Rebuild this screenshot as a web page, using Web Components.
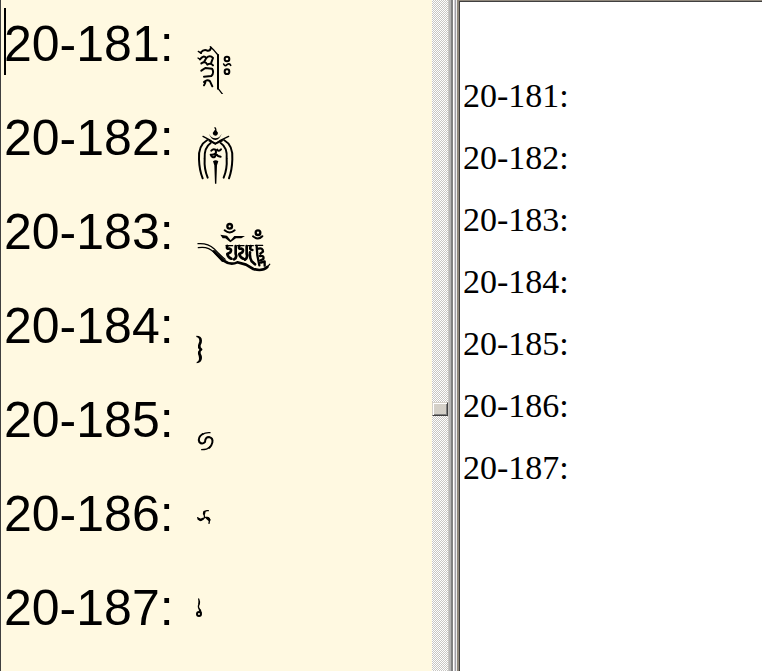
<!DOCTYPE html>
<html lang="en">
<head>
<meta charset="utf-8">
<title>Glyph list</title>
<style>
html, body { height: 100%; margin: 0; overflow: hidden; }
</style>
</head>
<body>
<glyph-compare></glyph-compare>
<script>
const INK = 'fill="none" stroke="#000" stroke-linecap="round" stroke-linejoin="round"';
const MARKS = {
  '20-181': `<g transform="translate(4 10) scale(.3333)"><g ${INK}>
    <path stroke-width="4" d="M61 26L72 37L84 51M84 151L98 169M25 40L34 46M30 64L24 60"/>
    <path stroke-width="6" d="M84 51V152"/>
    <path stroke-width="6" d="M32 44Q42 32 52 38Q60 40 63 29M30 64Q40 50 49 60L42 72M49 60Q60 50 69 60L64 73M34 76Q46 68 52 80Q62 74 69 82M34 98L46 90L66 92Q74 104 64 114L42 116M42 132Q52 122 60 130L67 145M42 142L46 134"/>
    <circle cx="111" cy="63" r="7" stroke-width="6"/><circle cx="111" cy="101" r="7" stroke-width="6"/>
    <path stroke-width="5" d="M101 78Q105 87 111 80Q118 74 122 82"/></g></g>`,
  '20-182': `<g transform="translate(4 0) scale(.3333)"><g ${INK}>
    <path stroke-width="4" d="M75 17Q80 22 77 28M39 43L63 56L76 66L91 55L116 43"/>
    <path stroke-width="6" d="M52 54Q24 70 27 112Q28 145 38 169M62 63Q42 77 44 110Q42 141 53 167M102 54Q130 70 127 112Q126 145 117 169M92 63Q113 77 110 110Q112 141 101 167"/>
    <path stroke-width="6" d="M58 56L76 65L96 56M64 86Q70 79 76 83Q80 91 76 95Q70 99 62 98Q67 110 75 104Q80 94 84 102L92 104M82 83Q86 90 93 82"/></g>
    <path d="M76 22L84 32Q83 41 76 41Q69 41 68 33ZM57 35Q64 49 76 49Q88 49 95 35Q89 53 76 54Q63 53 57 35ZM69 118Q77 112 85 118L81 130L79 185H75L73 130Z"/></g>`,
  '20-183': `<g transform="translate(4 2) scale(.3333)"><g ${INK}>
    <circle cx="119" cy="25" r="7" stroke-width="7"/><circle cx="204" cy="44" r="7" stroke-width="7"/>
    <path stroke-width="6" d="M104 37Q119 50 134 37M189 55Q204 68 217 55"/>
    <path stroke-width="4" d="M24 77Q54 75 72 92Q91 112 105 124M25 89Q54 84 72 103L97 130"/>
    <path stroke-width="8" d="M72 100Q88 117 101 128Q121 143 142 133L168 140L190 153Q217 161 232 147"/>
    <path stroke-width="4" d="M228 151L239 139M108 83H128M142 83H162M174 83H190M196 82H218"/>
    <path stroke-width="8" d="M112 84Q108 94 119 92Q126 94 121 103L112 108Q113 117 124 122M137 84V108Q142 118 132 124M148 84Q144 94 155 92Q162 94 157 103L148 108Q149 117 160 122M170 84V108Q174 118 165 125M182 84Q178 96 187 96M180 103Q178 118 185 130L195 139"/>
    <path stroke-width="7" d="M200 84L202 112L208 142M206 92Q219 89 219 101L211 107M210 114Q223 112 220 123L212 127M213 134L224 130V143"/></g>
    <path d="M91 50L111 53L122 67L133 54L165 54L154 61H138L121 73L106 61H98Z"/></g>`,
  '20-184': `<g transform="translate(0 20) scale(.3333)">
    <path d="M31 17Q48 17 48 32Q48 40 44 46Q42 52 49 57V60Q42 64 44 70Q48 77 48 84Q47 99 32 100V96Q39 95 39 85Q39 79 36 72Q34 64 40 59Q34 53 36 46L40 34Q40 22 31 21Z"/></g>`,
  '20-185': `<g transform="translate(4 20) scale(.3333)"><g ${INK}>
    <path stroke-width="4" d="M60 26Q46 25 37 31M35 77Q51 77 60 69"/>
    <path stroke-width="6" d="M38 30Q22 40 28 54Q36 63 45 54Q46 39 57 39Q70 42 67 56Q65 65 58 71"/></g></g>`,
  '20-186': `<g transform="translate(4 2) scale(.3333)"><g ${INK}>
    <path stroke-width="4" d="M55 32Q42 30 42 42L44 53L31 61L23 53M44 53Q58 50 59 59L57 70"/>
    <path stroke-width="7" d="M43 36L42 41M26 57L32 60L38 57M51 54L58 60"/></g></g>`,
  '20-187': `<g transform="translate(4 0) scale(.3333)"><g ${INK}>
    <path stroke-width="4" d="M26 21Q30 29 27 37Q22 46 31 54L33 63"/>
    <circle cx="27" cy="66" r="6" stroke-width="6"/></g>
    <path d="M26 24L30 33L26 42L25 35ZM25 43L35 62L27 58Z"/></g>`
};

function define(name, html, setup) {
  const template = document.createElement('template');
  template.innerHTML = html;
  customElements.define(name, class extends HTMLElement {
    constructor() {
      super();
      this.attachShadow({ mode: 'open' }).append(template.content.cloneNode(true));
    }
    connectedCallback() { if (setup) setup(this); }
  });
}

define('glyph-row', `
<style>
:host { display: flex; height: 94px; }
.label { width: 182px; flex: none; font: 50px/88px "Liberation Sans", Arial, sans-serif; white-space: nowrap; }
svg { width: 90px; height: 66px; margin-top: 28px; flex: none; }
</style>
<span class="label"><slot></slot></span><svg viewBox="0 0 90 66" aria-hidden="true"></svg>`,
  el => { el.shadowRoot.querySelector('svg').innerHTML = MARKS[el.getAttribute('mark')]; });

define('text-caret', `
<style>:host { position: absolute; left: 3px; top: 8px; width: 2px; height: 67px; background: #000; }</style>`);

define('scroll-track', `
<style>
:host { display: flex; flex-direction: column;
  background: repeating-conic-gradient(#c8c6c2 0 25%, #fff 0 50%) 0 0 / 2px 2px; }
.before { flex: 402; }
.after { flex: 255; }
button { height: 14px; width: 16px; padding: 0; flex: none; box-sizing: border-box; background: #d4d0c8;
  border: 1px solid; border-color: #d4d0c8 #404040 #404040 #d4d0c8; box-shadow: inset 1px 1px #fff, inset -1px -1px #808080; }
</style>
<div class="before"></div><button type="button" aria-label="Scroll position"></button><div class="after"></div>`);

define('pane-splitter', `
<style>
:host { display: block;
  background: linear-gradient(90deg, #c8c6c2 0 1px, #b4b4b4 1px 3px, #808080 3px 5px, #fff 5px 6px, #d4d0d4 6px 7px, #a0a0a8 7px 8px, #eee 8px 9px); }
</style>`);

define('glyph-pane', `
<style>
:host { display: block; position: relative; min-width: 0; overflow: hidden; box-sizing: border-box;
  background: #fff9e1; border-left: 1px solid #404040; padding-left: 3px; }
</style><slot></slot>`);

define('plain-pane', `
<style>
:host { display: block; min-width: 0; overflow: hidden; box-sizing: border-box; background: #fff;
  border: solid #90887c; border-width: 1px 0 0 2px; box-shadow: inset 1px 1px #404040; padding: 64px 0 0 4px;
  font: 34px/62px "Liberation Serif", "Times New Roman", serif; }
</style><slot></slot>`);

define('glyph-compare', `
<style>
:host { display: grid; grid-template-columns: 432fr 16px 9px 305fr; height: 100%; color: #000; }
</style>
<glyph-pane></glyph-pane><scroll-track></scroll-track><pane-splitter></pane-splitter><plain-pane></plain-pane>`,
  el => {
    const keys = Object.keys(MARKS);
    el.shadowRoot.querySelector('glyph-pane').innerHTML =
      '<text-caret></text-caret>' + keys.map(k => `<glyph-row mark="${k}">${k}:</glyph-row>`).join('');
    el.shadowRoot.querySelector('plain-pane').innerHTML = keys.map(k => `<div>${k}:</div>`).join('');
  });
</script>
</body>
</html>
